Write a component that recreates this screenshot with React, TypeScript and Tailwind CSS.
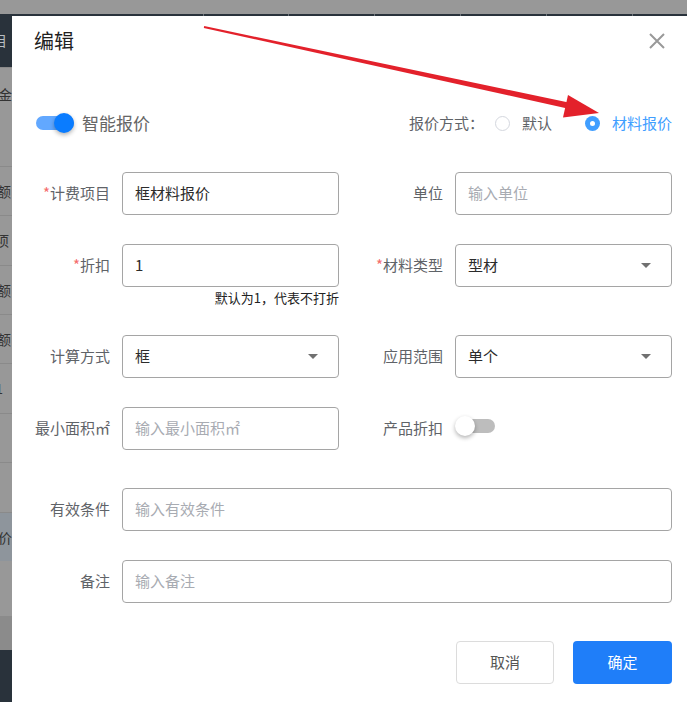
import type { ReactNode } from "react";

const font = { fontFamily: '"Noto Sans CJK SC", "Liberation Sans", sans-serif' };

// cut-off rows of the table behind the dialog
const stripRows: { h: string; bg: string; text?: string; pr: string; line?: boolean; light?: boolean; top?: boolean }[] = [
  { h: "h-[53px]", bg: "bg-[#29323b]", text: "目", pr: "pr-[5px]", light: true },
  { h: "h-[99px]", bg: "bg-[#989898]", text: "金", pr: "pr-0", line: true, top: true },
  { h: "h-[49px]", bg: "bg-[#989898]", text: "额", pr: "pr-px", line: true },
  { h: "h-[50px]", bg: "bg-[#989898]", text: "项", pr: "pr-[3px]", line: true },
  { h: "h-[49px]", bg: "bg-[#989898]", text: "额", pr: "pr-px", line: true },
  { h: "h-[49px]", bg: "bg-[#989898]", text: "额", pr: "pr-px", line: true },
  { h: "h-[50px]", bg: "bg-[#989898]", text: "1", pr: "pr-[9px]", line: true },
  { h: "h-[49px]", bg: "bg-[#989898]", pr: "pr-0", line: true },
  { h: "h-[50px]", bg: "bg-[#989898]", pr: "pr-0", line: true },
  { h: "h-[49px]", bg: "bg-[#8e959c]", text: "价", pr: "pr-0", line: true },
  { h: "h-[55px]", bg: "bg-[#989898]", pr: "pr-0" },
  { h: "h-[34px]", bg: "bg-[#8b8b8b]", pr: "pr-0" },
];

const tickGaps = [191, 84, 85, 85, 85, 85];

function Field({ label, required, children }: { label: string; required?: boolean; children: ReactNode }) {
  return (
    <div className="flex items-center">
      <div className="w-[88px] shrink-0 pr-[12px] text-right text-[15px] text-[#5f6368] whitespace-nowrap">
        {required && <span className="text-[#f56c6c]">*</span>}
        {label}
      </div>
      <div className="flex-1 min-w-0">{children}</div>
    </div>
  );
}

function Input({ value, placeholder }: { value?: string; placeholder?: string }) {
  return (
    <div className="h-[43px] flex items-center px-[12px] border border-[#a5a5a5] rounded-[4px] text-[15px] bg-white">
      {value ? <span className="text-[#2b2b2b]">{value}</span> : <span className="text-[#a8abb2]">{placeholder}</span>}
    </div>
  );
}

function Select({ value }: { value: string }) {
  return (
    <div className="h-[43px] flex items-center justify-between pl-[12px] pr-[20px] border border-[#a5a5a5] rounded-[4px] text-[15px] bg-white">
      <span className="text-[#2b2b2b]">{value}</span>
      <svg width="10" height="5" viewBox="0 0 10 5">
        <path d="M0 0h10L5 5z" fill="#707070" />
      </svg>
    </div>
  );
}

function Switch({ on }: { on: boolean }) {
  return (
    <div className="relative w-[40px] h-[20px] flex items-center">
      <div className={`ml-[2px] w-[38px] h-[14px] rounded-full ${on ? "bg-[#62a8ff]" : "bg-[#bdbdbd]"}`} />
      <div
        className={`absolute top-0 w-[20px] h-[20px] rounded-full shadow-[0_2px_4px_rgba(0,0,0,0.3)] ${
          on ? "right-0 bg-[#0a7cff]" : "left-0 bg-white"
        }`}
      />
    </div>
  );
}

function Radio({ checked, label }: { checked?: boolean; label: string }) {
  return (
    <div className="flex items-center gap-[12px]">
      {checked ? (
        <div className="w-[15px] h-[15px] rounded-full bg-[#409eff] flex items-center justify-center">
          <div className="w-[5px] h-[5px] rounded-full bg-white" />
        </div>
      ) : (
        <div className="w-[15px] h-[15px] rounded-full border border-[#d4d7de] bg-white" />
      )}
      <span className={`text-[15px] ${checked ? "text-[#409eff]" : "text-[#5f6368]"}`}>{label}</span>
    </div>
  );
}

export default function App() {
  return (
    <div className="relative w-[687px] h-[702px] overflow-hidden flex flex-col bg-[#989898]" style={font}>
      <div className="h-[14px] shrink-0 bg-[#989898]" />
      <div className="flex-1 flex min-h-0">
        {/* table rows peeking out on the left */}
        <div className="w-[12px] shrink-0 flex flex-col">
          {stripRows.map((r, i) => (
            <div
              key={i}
              className={`${r.h} ${r.bg} ${r.pr} shrink-0 flex justify-end overflow-hidden text-[14px] whitespace-nowrap ${
                r.top ? "items-start pt-[16px]" : "items-center"
              } ${r.light ? "text-[#b8bdc2]" : "text-[#333]"} ${r.line ? "border-t border-[#8a8a8a]" : ""}`}
            >
              {r.text}
            </div>
          ))}
          <div className="flex-1 bg-[#29323b]" />
        </div>

        <div className="flex-1 flex flex-col min-w-0">
          <div className="h-[2px] shrink-0 bg-[#29323b] flex">
            {tickGaps.map((g, i) => (
              <div key={i} className="flex">
                <div style={{ width: g }} />
                <div className="w-px bg-[#6b7279]" />
              </div>
            ))}
          </div>

          {/* dialog */}
          <div className="flex-1 bg-white flex flex-col">
            <div className="h-[50px] shrink-0 flex items-center justify-between pl-[22px] pr-[22px]">
              <span className="text-[20px] text-[#1f1f1f]">编辑</span>
              <svg width="16" height="16" viewBox="0 0 16 16">
                <path d="M1 1L15 15M15 1L1 15" stroke="#999" strokeWidth="2" />
              </svg>
            </div>

            <div className="pl-[22px] pr-[15px]">
              <div className="mt-[37px] h-[40px] flex items-center justify-between">
                <div className="flex items-center gap-[8px]">
                  <Switch on />
                  <span className="text-[17px] text-[#666]">智能报价</span>
                </div>
                <div className="flex items-center">
                  <span className="text-[15px] text-[#5f6368] mr-[11px]">报价方式：</span>
                  <Radio label="默认" />
                  <div className="w-[33px]" />
                  <Radio checked label="材料报价" />
                </div>
              </div>

              <div className="mt-[29px] grid grid-cols-2 gap-x-[28px] items-start">
                <Field label="计费项目" required>
                  <Input value="框材料报价" />
                </Field>
                <Field label="单位">
                  <Input placeholder="输入单位" />
                </Field>
              </div>

              <div className="mt-[29px] grid grid-cols-2 gap-x-[28px] items-start">
                <div>
                  <Field label="折扣" required>
                    <Input value="1" />
                  </Field>
                  <div className="mt-[2px] text-right text-[13px] leading-[18px] text-[#222]">默认为1，代表不打折</div>
                </div>
                <Field label="材料类型" required>
                  <Select value="型材" />
                </Field>
              </div>

              <div className="mt-[28px] grid grid-cols-2 gap-x-[28px] items-start">
                <Field label="计算方式">
                  <Select value="框" />
                </Field>
                <Field label="应用范围">
                  <Select value="单个" />
                </Field>
              </div>

              <div className="mt-[29px] grid grid-cols-2 gap-x-[28px] items-start">
                <Field label="最小面积㎡">
                  <Input placeholder="输入最小面积㎡" />
                </Field>
                <div className="h-[43px] flex items-center">
                  <div className="w-[88px] shrink-0 pr-[12px] text-right text-[15px] text-[#5f6368]">产品折扣</div>
                  <div className="-mt-[5px]">
                    <Switch on={false} />
                  </div>
                </div>
              </div>

              <div className="mt-[38px]">
                <Field label="有效条件">
                  <Input placeholder="输入有效条件" />
                </Field>
              </div>

              <div className="mt-[29px]">
                <Field label="备注">
                  <Input placeholder="输入备注" />
                </Field>
              </div>

              <div className="mt-[38px] flex justify-end gap-[19px]">
                <button className="w-[98px] h-[43px] rounded-[4px] border border-[#dcdcdc] bg-white text-[15px] text-[#555]">
                  取消
                </button>
                <button className="w-[99px] h-[43px] rounded-[4px] bg-[#1f7ef9] text-[15px] text-white">确定</button>
              </div>
            </div>
          </div>
        </div>
      </div>

      {/* annotation arrow */}
      <svg className="absolute inset-0 pointer-events-none" width="687" height="702" viewBox="0 0 687 702">
        <polygon points="204.2,26 203.8,28 567.4,108.4 568.6,102.6" fill="#e3212b" />
        <polygon points="568,95 599,113 563,117.5" fill="#e3212b" />
      </svg>
    </div>
  );
}
